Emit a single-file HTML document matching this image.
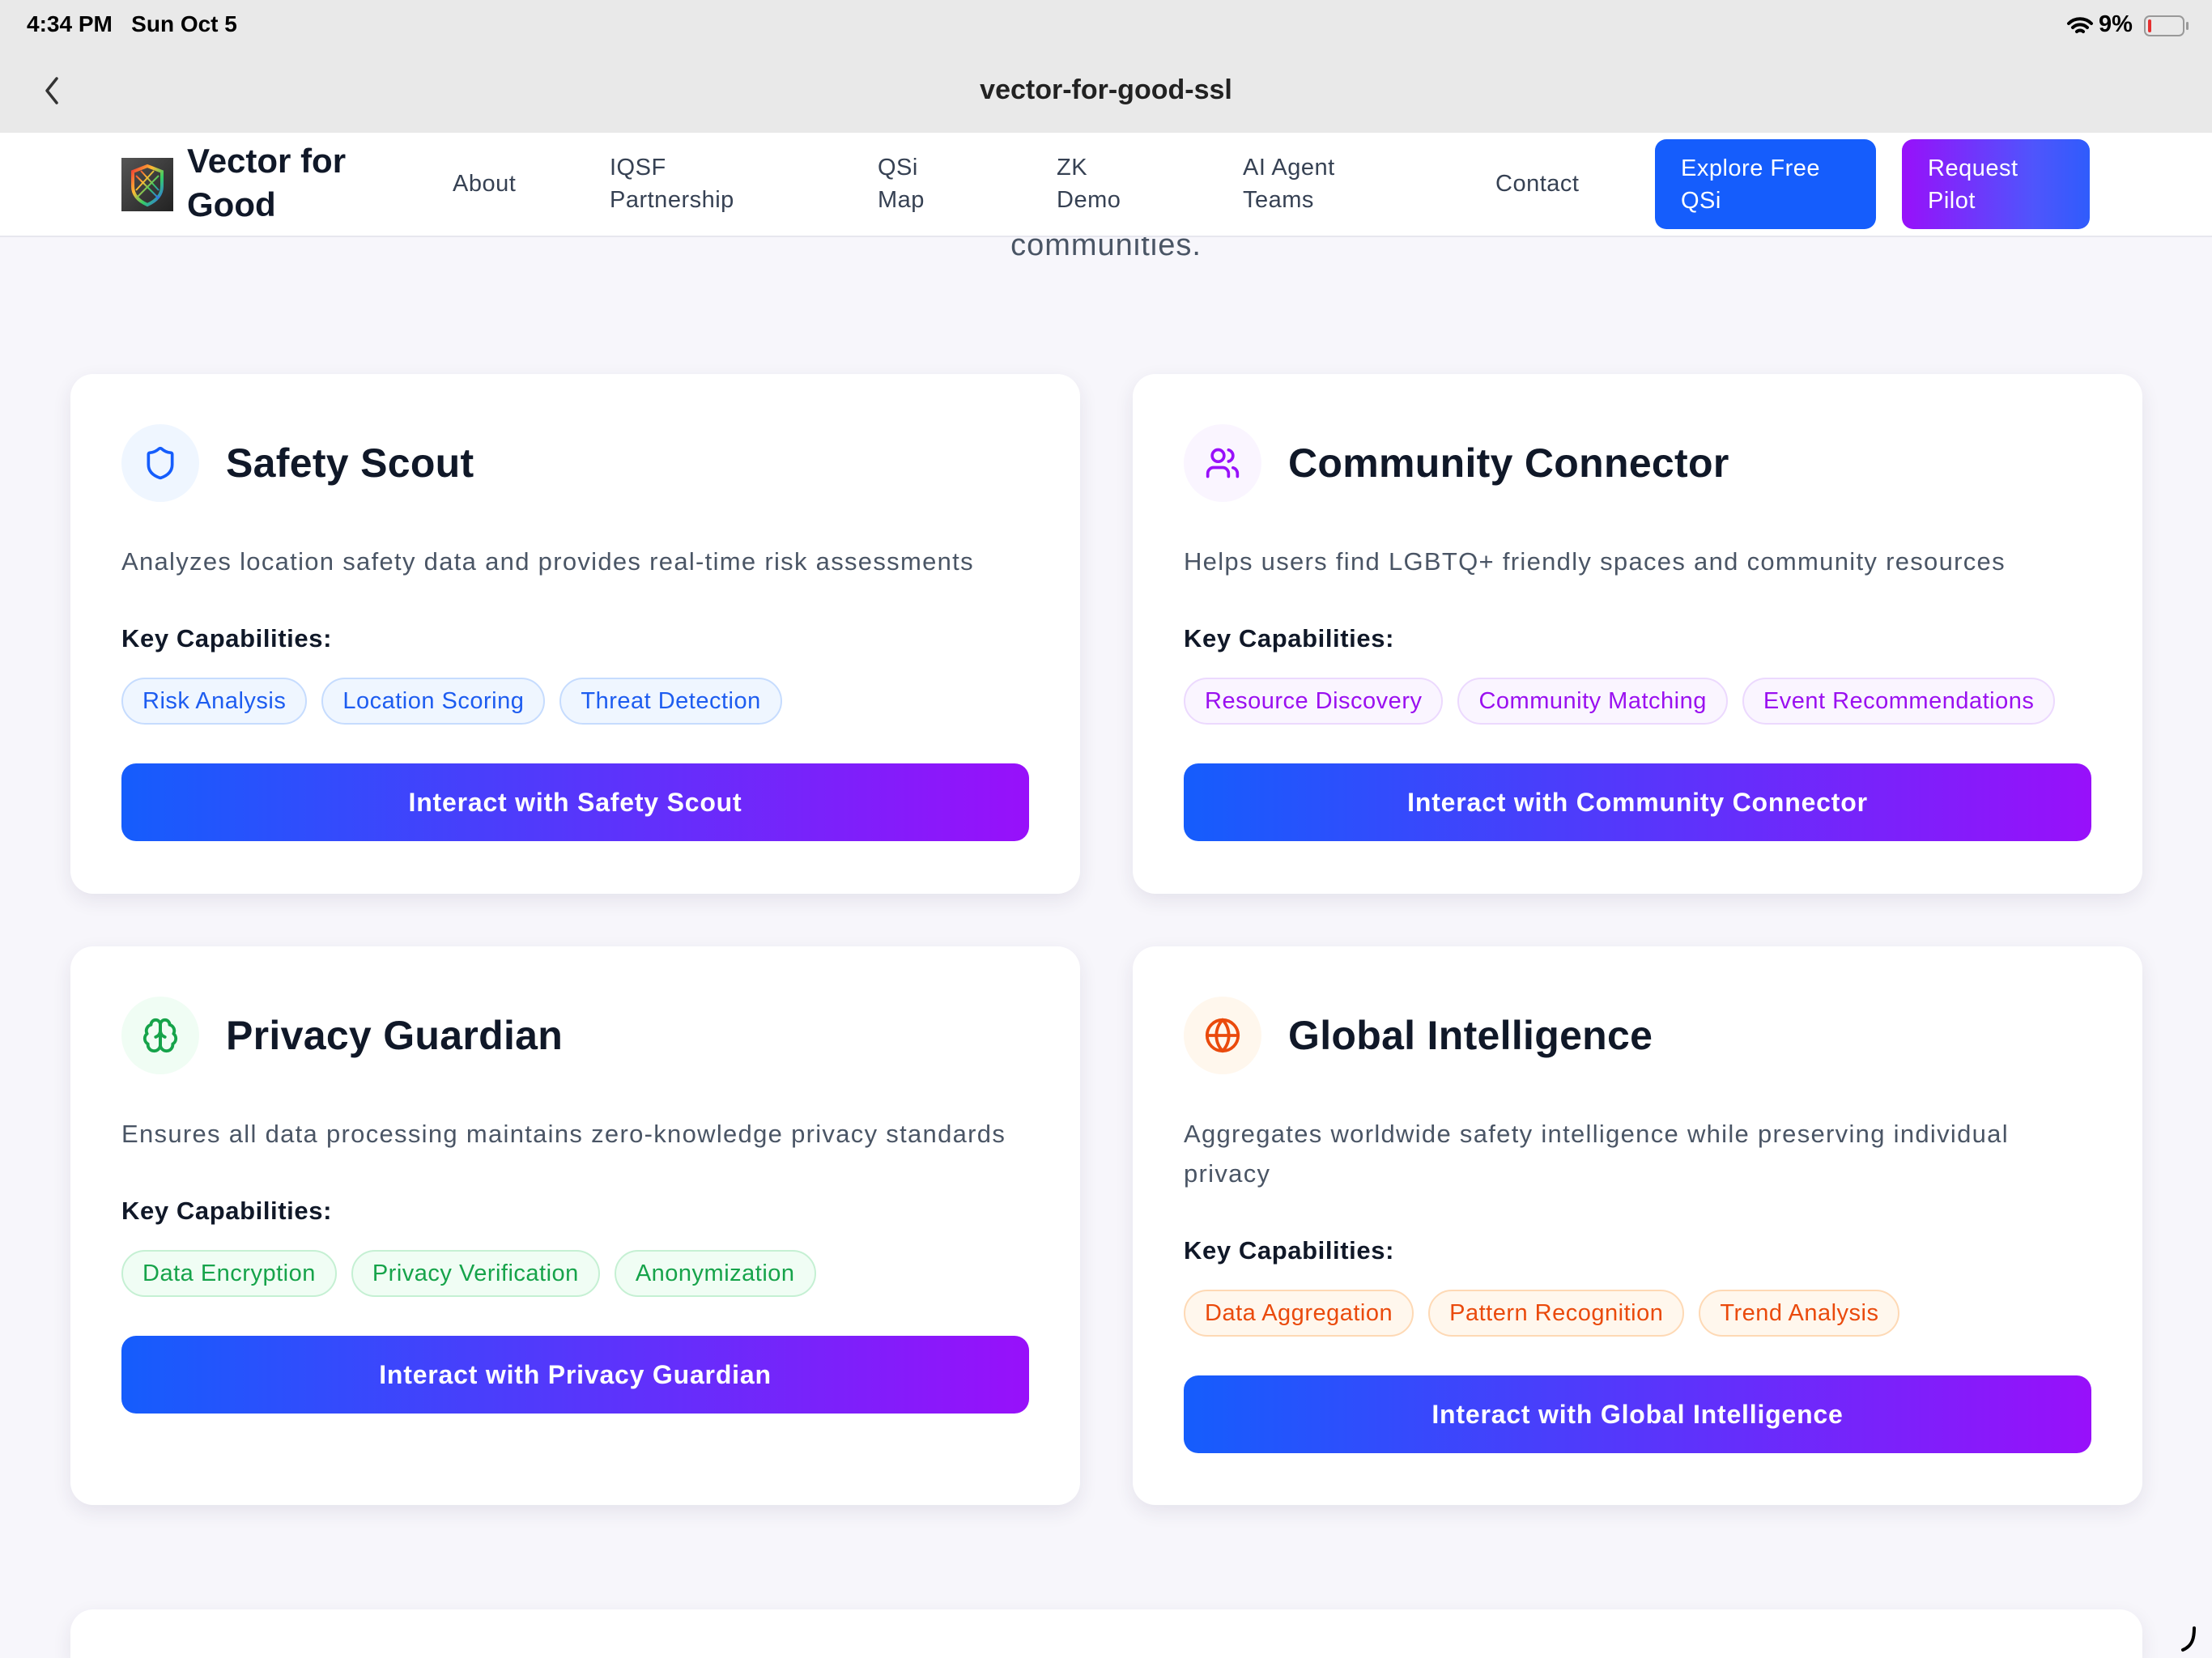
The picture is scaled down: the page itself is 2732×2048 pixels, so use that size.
<!DOCTYPE html>
<html><head><meta charset="utf-8">
<style>
*{box-sizing:border-box;margin:0;padding:0}
html,body{width:2732px;height:2048px;overflow:hidden}
body{background:#f7f6fb;font-family:"Liberation Sans",sans-serif;position:relative;color:#101828}
.status{position:absolute;left:0;top:0;width:2732px;height:164px;background:#e9e9e9;z-index:5}
.time{position:absolute;left:33px;top:14px;font-size:28px;font-weight:bold;color:#000}
.urlt{position:absolute;left:0;width:2732px;top:92px;text-align:center;font-size:34px;font-weight:bold;color:#222}
.nav{position:absolute;left:0;top:164px;width:2732px;height:129px;background:#fff;border-bottom:2px solid #e7e7ee;z-index:5}
.nav .it{position:absolute;font-size:29px;line-height:40px;color:#364153;letter-spacing:.5px}
.logo{position:absolute;left:150px;top:195px;width:64px;height:66px;background:linear-gradient(135deg,#555,#222);z-index:6}
.brand{position:absolute;left:231px;top:172px;font-size:42px;font-weight:bold;line-height:54px;color:#101828;z-index:6}
.btn{position:absolute;top:172px;height:111px;border-radius:14px;color:#fff;font-size:29px;line-height:40px;padding:16px 32px;z-index:6;letter-spacing:.5px}
.comm{position:absolute;left:0;width:2732px;top:282px;text-align:center;font-size:38px;color:#4a5565;letter-spacing:1px}
.card{position:absolute;background:#fff;border-radius:28px;box-shadow:0 8px 24px rgba(40,30,80,.09);padding:62px 63px 0 63px}
.hd{display:flex;align-items:center;height:96px}
.ic{width:96px;height:96px;border-radius:50%;display:flex;align-items:center;justify-content:center;margin-right:33px}
.hd h2{font-size:50px;font-weight:bold;color:#101828;letter-spacing:.3px}
.desc{margin-top:49px;font-size:31px;line-height:49px;color:#4a5565;letter-spacing:1.3px}
.kc{margin-top:46px;font-size:31px;line-height:49px;font-weight:bold;color:#101828;letter-spacing:.6px}
.tags{margin-top:24px;display:flex;gap:18px}
.tag{height:58px;line-height:54px;border-radius:29px;padding:0 24px;font-size:29px;border:2px solid;letter-spacing:.5px}
.b{background:#eff6ff;border-color:#c6dcfe;color:#1d5cf0}
.p{background:#faf5ff;border-color:#ecd9fe;color:#9a10f0}
.g{background:#f0fdf4;border-color:#c5f0d3;color:#16a34a}
.o{background:#fff7ed;border-color:#fed9b5;color:#ea4a0c}
.act{margin-top:48px;height:96px;border-radius:18px;background:linear-gradient(90deg,#155dfc,#9810fa);color:#fff;font-size:32px;font-weight:bold;text-align:center;line-height:96px;letter-spacing:.8px}
</style></head><body>
<div class="status">
<div class="time">4:34 PM&nbsp;&nbsp; Sun Oct 5</div>
<svg style="position:absolute;left:2552px;top:20px" width="34" height="24" viewBox="0 0 34 24"><path d="M3 9a20 20 0 0 1 28 0M8 14a13 13 0 0 1 18 0M13 19a6 6 0 0 1 8 0" stroke="#000" stroke-width="4" fill="none" stroke-linecap="round"/></svg>
<div style="position:absolute;left:2592px;top:14px;font-size:29px;font-weight:bold;color:#000">9%</div>
<div style="position:absolute;left:2648px;top:19px;width:50px;height:26px;border:2px solid #999;border-radius:7px"><div style="position:absolute;left:3px;top:3px;width:4px;height:16px;background:#e53030;border-radius:2px"></div></div>
<div style="position:absolute;left:2700px;top:27px;width:3px;height:10px;background:#999;border-radius:2px"></div>
<svg style="position:absolute;left:52px;top:94px" width="24" height="36" viewBox="0 0 24 36"><path d="M18 3L6 18l12 15" stroke="#333" stroke-width="3.5" fill="none" stroke-linecap="round" stroke-linejoin="round"/></svg>
<div class="urlt">vector-for-good-ssl</div>
</div>
<div class="comm">communities.</div>
<div class="nav">
<div class="it" style="left:559px;top:43px">About</div>
<div class="it" style="left:753px;top:23px">IQSF<br>Partnership</div>
<div class="it" style="left:1084px;top:23px">QSi<br>Map</div>
<div class="it" style="left:1305px;top:23px">ZK<br>Demo</div>
<div class="it" style="left:1535px;top:23px">AI Agent<br>Teams</div>
<div class="it" style="left:1847px;top:43px">Contact</div>
</div>
<div class="logo"><svg width="64" height="66" viewBox="0 0 64 66"><path d="M32 10l18 7v18c0 12-9 19-18 23-9-4-18-11-18-23V17z" fill="none" stroke="url(#rb)" stroke-width="4"/><path d="M18 22l28 28M46 22L18 50M24 16l22 24M40 16L18 40" stroke="url(#rb)" stroke-width="2"/><defs><linearGradient id="rb" x1="0" y1="0" x2="1" y2="1"><stop offset="0" stop-color="#e33"/><stop offset=".35" stop-color="#fb3"/><stop offset=".65" stop-color="#3c6"/><stop offset="1" stop-color="#36f"/></linearGradient></defs></svg></div>
<div class="brand">Vector for<br>Good</div>
<div class="btn" style="left:2044px;width:273px;background:#155dfc">Explore Free<br>QSi</div>
<div class="btn" style="left:2349px;width:232px;background:linear-gradient(90deg,#9810fa,#4f55fc 70%,#2f5cfc)">Request<br>Pilot</div>

<div class="card" style="left:87px;top:462px;width:1247px;height:642px">
<div class="hd"><div class="ic" style="background:#eff6ff"><svg width="44" height="44" viewBox="0 0 24 24" fill="none" stroke="#155dfc" stroke-width="2" stroke-linecap="round" stroke-linejoin="round"><path d="M20 13c0 5-3.5 7.5-7.66 8.95a1 1 0 0 1-.67-.01C7.5 20.5 4 18 4 13V6a1 1 0 0 1 1-1c2 0 4.5-1.2 6.24-2.72a1.17 1.17 0 0 1 1.52 0C14.51 3.81 17 5 19 5a1 1 0 0 1 1 1z"/></svg></div><h2>Safety Scout</h2></div>
<div class="desc">Analyzes location safety data and provides real-time risk assessments</div>
<div class="kc">Key Capabilities:</div>
<div class="tags"><span class="tag b">Risk Analysis</span><span class="tag b">Location Scoring</span><span class="tag b">Threat Detection</span></div>
<div class="act">Interact with Safety Scout</div>
</div>

<div class="card" style="left:1399px;top:462px;width:1247px;height:642px">
<div class="hd"><div class="ic" style="background:#faf5ff"><svg width="44" height="44" viewBox="0 0 24 24" fill="none" stroke="#9810fa" stroke-width="2" stroke-linecap="round" stroke-linejoin="round"><path d="M16 21v-2a4 4 0 0 0-4-4H6a4 4 0 0 0-4 4v2"/><circle cx="9" cy="7" r="4"/><path d="M22 21v-2a4 4 0 0 0-3-3.87"/><path d="M16 3.13a4 4 0 0 1 0 7.75"/></svg></div><h2>Community Connector</h2></div>
<div class="desc">Helps users find LGBTQ+ friendly spaces and community resources</div>
<div class="kc">Key Capabilities:</div>
<div class="tags"><span class="tag p">Resource Discovery</span><span class="tag p">Community Matching</span><span class="tag p">Event Recommendations</span></div>
<div class="act">Interact with Community Connector</div>
</div>

<div class="card" style="left:87px;top:1169px;width:1247px;height:690px">
<div class="hd"><div class="ic" style="background:#f0fdf4"><svg width="46" height="46" viewBox="0 0 24 24" fill="none" stroke="#16a34a" stroke-width="2" stroke-linecap="round" stroke-linejoin="round"><path d="M12 5a3 3 0 1 0-5.997.125 4 4 0 0 0-2.526 5.77 4 4 0 0 0 .556 6.588A4 4 0 1 0 12 18Z"/><path d="M12 5a3 3 0 1 1 5.997.125 4 4 0 0 1 2.526 5.77 4 4 0 0 1-.556 6.588A4 4 0 1 1 12 18Z"/><path d="M12 5v13M9 13a4.5 4.5 0 0 0 3-4M15 13a4.5 4.5 0 0 1-3-4"/></svg></div><h2>Privacy Guardian</h2></div>
<div class="desc">Ensures all data processing maintains zero-knowledge privacy standards</div>
<div class="kc">Key Capabilities:</div>
<div class="tags"><span class="tag g">Data Encryption</span><span class="tag g">Privacy Verification</span><span class="tag g">Anonymization</span></div>
<div class="act">Interact with Privacy Guardian</div>
</div>

<div class="card" style="left:1399px;top:1169px;width:1247px;height:690px">
<div class="hd"><div class="ic" style="background:#fff7ed"><svg width="46" height="46" viewBox="0 0 24 24" fill="none" stroke="#ea4a0c" stroke-width="2" stroke-linecap="round" stroke-linejoin="round"><circle cx="12" cy="12" r="10"/><path d="M12 2a14.5 14.5 0 0 0 0 20 14.5 14.5 0 0 0 0-20"/><path d="M2 12h20"/></svg></div><h2>Global Intelligence</h2></div>
<div class="desc">Aggregates worldwide safety intelligence while preserving individual<br>privacy</div>
<div class="kc">Key Capabilities:</div>
<div class="tags"><span class="tag o">Data Aggregation</span><span class="tag o">Pattern Recognition</span><span class="tag o">Trend Analysis</span></div>
<div class="act">Interact with Global Intelligence</div>
</div>

<div class="card" style="left:87px;top:1988px;width:2559px;height:60px;border-bottom-left-radius:0;border-bottom-right-radius:0"></div>
<svg style="position:absolute;left:2692px;top:2008px" width="24" height="34" viewBox="0 0 24 34"><path d="M18 3c0 12-2 22-14 27" stroke="#000" stroke-width="4" fill="none" stroke-linecap="round"/></svg>
</body></html>
